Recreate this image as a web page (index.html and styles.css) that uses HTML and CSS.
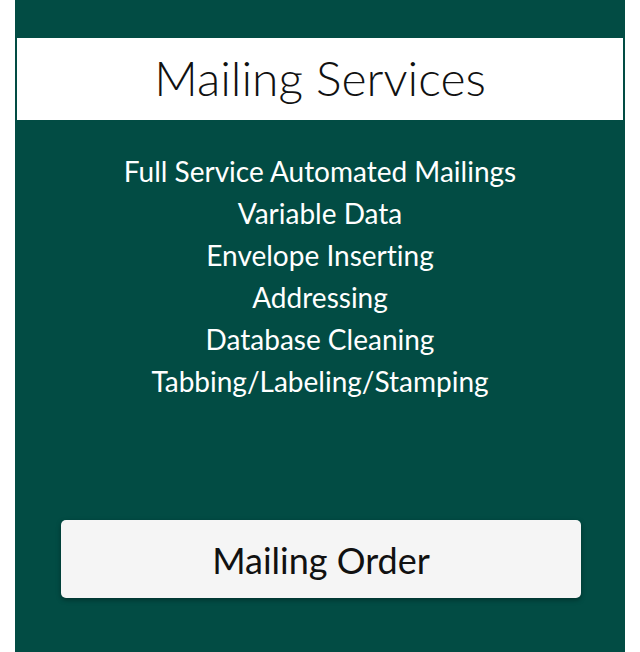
FILE: index.html
```html
<!DOCTYPE html>
<html>
<head>
<meta charset="utf-8">
<link rel="stylesheet" href="styles.css">
</head>
<body>
<div class="card">
  <div class="title-bar"><h1 class="title">Mailing Services</h1></div>
  <ul class="services">
    <li>Full Service Automated Mailings</li>
    <li>Variable Data</li>
    <li>Envelope Inserting</li>
    <li>Addressing</li>
    <li>Database Cleaning</li>
    <li>Tabbing/Labeling/Stamping</li>
  </ul>
  <div class="actions"><button class="order-btn">Mailing Order</button></div>
</div>
</body>
</html>
```
FILE: styles.css
```css
html, body { margin: 0; padding: 0; background: #fff; }
body {
  font-family: Lato, "Open Sans", sans-serif;
  font-variant-ligatures: none;
}
.card {
  margin: 0 15px;
  height: 652px;
  background: #024c44;
  padding: 38px 2px 0;
  box-sizing: border-box;
}
.title-bar {
  background: #fff;
  height: 82px;
  display: flex;
  align-items: center;
  justify-content: center;
}
.title {
  margin: 0 0 2px;
  font-size: 48px;
  font-weight: 300;
  color: #111;
  line-height: 1;
}
.services {
  list-style: none;
  margin: 30px 0 0;
  padding: 0;
  text-align: center;
  color: #fff;
  font-size: 28px;
  line-height: 42px;
}
.actions {
  margin: 118px 42px 0 44px;
}
.order-btn {
  display: block;
  width: 100%;
  height: 78px;
  border: 0;
  border-radius: 5px;
  background: #f5f5f5;
  box-shadow: 0 2px 5px rgba(0,0,0,0.35);
  font-family: Lato, sans-serif;
  font-variant-ligatures: none;
  font-size: 36px;
  color: #111;
  padding: 2px 0 0;
}
```
